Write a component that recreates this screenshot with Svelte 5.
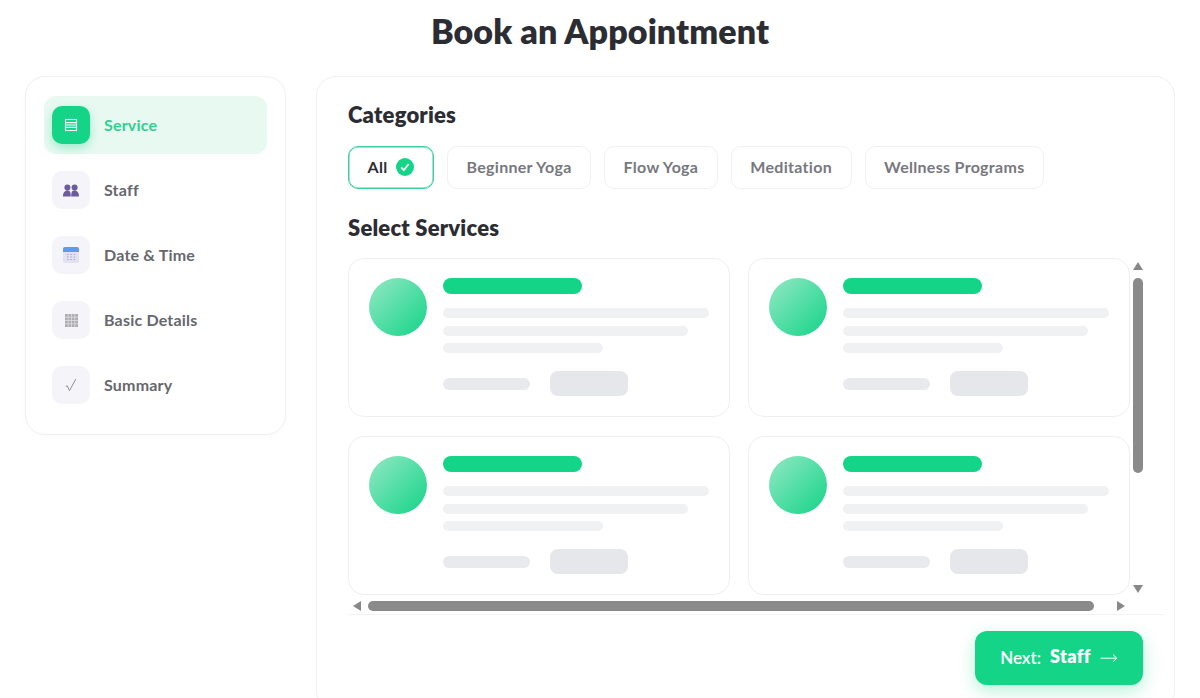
<script>
  const steps = [
    { id: 'service', label: 'Service' },
    { id: 'staff', label: 'Staff' },
    { id: 'date', label: 'Date & Time' },
    { id: 'details', label: 'Basic Details' },
    { id: 'summary', label: 'Summary' }
  ];
  const categories = ['All', 'Beginner Yoga', 'Flow Yoga', 'Meditation', 'Wellness Programs'];
  const placeholders = [1, 2, 3, 4, 5, 6];

  let category = $state('All');
</script>

<div class="page">
  <h1 class="title">Book an Appointment</h1>

  <div class="layout">
    <nav class="sidebar">
      {#each steps as step, i}
        <div class="step" class:active={i === 0}>
          <span class="step-icon">
            {#if step.id === 'service'}
              <svg width="14" height="14" viewBox="0 0 14 14">
                <rect x="1.5" y="1.5" width="11" height="11" fill="none" stroke="#fff" stroke-width="1.1" />
                <path d="M1.5 4.6h11M1.5 7h11M1.5 9.4h11" stroke="#fff" stroke-width="1.1" />
              </svg>
            {:else if step.id === 'staff'}
              <svg width="16" height="13" viewBox="0 0 16 13" fill="#6f5a9e">
                <circle cx="4.4" cy="3.4" r="3" />
                <circle cx="11.6" cy="3.4" r="3" />
                <path d="M0 12.6c0-3.6 1.6-6 4.4-6s3.3 1.6 3.4 6zM8.2 12.6c.1-4.4 .6-6 3.4-6s4.4 2.4 4.4 6z" />
              </svg>
            {:else if step.id === 'date'}
              <svg width="18" height="18" viewBox="0 0 18 18">
                <rect x="1" y="1" width="16" height="16" rx="2" fill="#e2e1f3" />
                <path d="M1 6V3a2 2 0 0 1 2-2h12a2 2 0 0 1 2 2v3z" fill="#5c9cf0" />
                <path d="M5 8.5h1.5M8.3 8.5h1.5M11.6 8.5h1.5M5 11h1.5M8.3 11h1.5M11.6 11h1.5M5 13.5h1.5M8.3 13.5h1.5M11.6 13.5h1.5" stroke="#a9a6c6" stroke-width="1.2" />
              </svg>
            {:else if step.id === 'details'}
              <svg width="13" height="13" viewBox="0 0 13 13">
                <rect width="13" height="13" fill="#adadb2" />
                <path d="M3.2 0v13M6.5 0v13M9.8 0v13M0 3.2h13M0 6.5h13M0 9.8h13" stroke="#e4e4e8" stroke-width=".7" />
              </svg>
            {:else}
              <svg width="14" height="14" viewBox="0 0 14 14" fill="none">
                <path d="M1.8 8.6l1.4-.9 2.3 5L11.8 1" stroke="#8f8f94" stroke-width="1" />
              </svg>
            {/if}
          </span>
          <span class="step-label">{step.label}</span>
        </div>
      {/each}
    </nav>

    <main class="panel">
      <h2 class="heading">Categories</h2>
      <div class="chips">
        {#each categories as name}
          <button class="chip" class:selected={category === name} onclick={() => (category = name)}>
            {name}
            {#if category === name}
              <svg width="18" height="18" viewBox="0 0 18 18">
                <circle cx="9" cy="9" r="9" fill="#14d488" />
                <path d="M5.2 9.4l2.6 2.8 4.8-6.2" fill="none" stroke="#fff" stroke-width="1.7" />
              </svg>
            {/if}
          </button>
        {/each}
      </div>

      <h2 class="heading services-heading">Select Services</h2>
      <div class="services">
        <div class="viewport">
          <div class="grid">
            {#each placeholders as id (id)}
              <div class="card">
                <div class="avatar"></div>
                <div class="card-body">
                  <div class="bar name"></div>
                  <div class="bar line w1"></div>
                  <div class="bar line w2"></div>
                  <div class="bar line w3"></div>
                  <div class="card-foot">
                    <div class="bar price"></div>
                    <div class="bar action"></div>
                  </div>
                </div>
              </div>
            {/each}
          </div>
        </div>

        <div class="vbar">
          <svg class="arrow-up" width="10" height="8" viewBox="0 0 10 8"><path d="M5 0l5 8H0z" fill="#888" /></svg>
          <div class="vthumb"></div>
          <svg class="arrow-down" width="10" height="8" viewBox="0 0 10 8"><path d="M5 8l5-8H0z" fill="#888" /></svg>
        </div>
        <div class="hbar">
          <svg class="arrow-left" width="8" height="10" viewBox="0 0 8 10"><path d="M0 5l8-5v10z" fill="#888" /></svg>
          <div class="hthumb"></div>
          <svg class="arrow-right" width="8" height="10" viewBox="0 0 8 10"><path d="M8 5L0 0v10z" fill="#888" /></svg>
        </div>
      </div>

      <div class="footer">
        <button class="next">
          <span>Next:</span>
          <strong>Staff</strong>
          <svg width="18" height="10" viewBox="0 0 18 10" fill="none">
            <path d="M0.5 5.2h16M13 1.6l3.8 3.6L13 8.8" stroke="#fff" stroke-width="1" />
          </svg>
        </button>
      </div>
    </main>
  </div>
</div>

<style>
  :global(body) {
    background: #fff;
    font-family: 'Lato', 'Noto Sans', sans-serif;
    color: #2c2d33;
  }

  .page {
    height: 100vh;
    overflow: hidden;
    box-sizing: border-box;
    padding: 10px 25px 0;
  }

  .title {
    margin: 0 0 24px;
    font-size: 34px;
    line-height: 42px;
    font-weight: 800;
    letter-spacing: 0.1px;
    text-align: center;
    color: #2c2d33;
  }

  .layout {
    display: flex;
    align-items: flex-start;
    gap: 30px;
  }

  /* ── Sidebar ────────────────────────── */
  .sidebar {
    width: 261px;
    box-sizing: border-box;
    flex-shrink: 0;
    display: flex;
    flex-direction: column;
    gap: 7px;
    padding: 19px 18px 20px;
    background: #fff;
    border: 1px solid #eef0f2;
    border-radius: 20px;
    box-shadow: 0 2px 8px rgba(0, 0, 0, 0.02);
  }

  .step {
    height: 58px;
    display: flex;
    align-items: center;
    gap: 14px;
    padding: 0 8px;
    border-radius: 12px;
  }
  .step.active {
    background: #e8f9f1;
  }

  .step-icon {
    width: 38px;
    height: 38px;
    display: flex;
    align-items: center;
    justify-content: center;
    background: #f4f4f9;
    border-radius: 10px;
  }
  .active .step-icon {
    background: #14d488;
    box-shadow: 0 4px 10px rgba(20, 212, 136, 0.35);
  }

  .step-label {
    margin-top: -2px;
    font-size: 16px;
    font-weight: 700;
    letter-spacing: 0.2px;
    color: #66676d;
  }
  .active .step-label {
    color: #2fd192;
  }

  /* ── Panel ──────────────────────────── */
  .panel {
    width: 859px;
    box-sizing: border-box;
    padding: 25px 31px 25px;
    background: #fff;
    border: 1px solid #eef0f2;
    border-radius: 20px;
  }

  .heading {
    margin: 0;
    font-size: 22px;
    line-height: 26px;
    font-weight: 800;
    letter-spacing: 0.2px;
    color: #2c2d33;
  }
  .services-heading {
    margin-top: 26px;
    margin-bottom: 17px;
  }

  .chips {
    display: flex;
    gap: 13px;
    margin-top: 18px;
  }
  .chip {
    height: 43px;
    display: flex;
    align-items: center;
    gap: 9px;
    padding: 0 18.5px 2px;
    font: 700 16px 'Lato', 'Noto Sans', sans-serif;
    letter-spacing: 0.3px;
    color: #77787e;
    background: #fff;
    border: 1px solid #f0f1f3;
    border-radius: 10px;
  }
  .chip.selected {
    color: #2c2d33;
    border-color: #3fcf9d;
    box-shadow: inset 0 0 0 0.5px #3fcf9d;
  }

  /* ── Card list with its scrollbars ──── */
  .services {
    display: grid;
    grid-template-columns: 785px 10px;
    grid-template-rows: 343px 10px;
  }
  .viewport {
    overflow: hidden;
  }

  .vbar {
    display: flex;
    flex-direction: column;
    align-items: center;
  }
  .hbar {
    display: flex;
    align-items: center;
  }
  .arrow-up {
    flex-shrink: 0;
    margin: 4px 0 8px;
  }
  .arrow-down {
    flex-shrink: 0;
    margin: auto 0 8px;
  }
  .arrow-left {
    flex-shrink: 0;
    margin: 0 7px 0 5px;
  }
  .arrow-right {
    flex-shrink: 0;
    margin: 0 8px 0 auto;
  }
  .vthumb {
    width: 10px;
    height: 195px;
    background: #8a8a8a;
    border-radius: 5px;
  }
  .hthumb {
    width: 726px;
    height: 10px;
    background: #8a8a8a;
    border-radius: 5px;
  }

  .grid {
    display: grid;
    grid-template-columns: 382px 382px;
    column-gap: 18px;
    row-gap: 19px;
  }

  .card {
    height: 159px;
    box-sizing: border-box;
    display: flex;
    gap: 16px;
    padding: 19px 20px;
    background: #fff;
    border: 1px solid #eeeff1;
    border-radius: 16px;
  }
  .avatar {
    width: 58px;
    height: 58px;
    flex-shrink: 0;
    border-radius: 50%;
    background: linear-gradient(135deg, #93e8c4, #14d488);
  }
  .card-body {
    flex: 1;
    display: flex;
    flex-direction: column;
  }

  .bar {
    border-radius: 8px;
    background: #f0f1f3;
  }
  .name {
    width: 139px;
    height: 16px;
    flex-shrink: 0;
    background: #14d488;
  }
  .line {
    height: 10px;
    flex-shrink: 0;
    margin-top: 7.5px;
  }
  .name + .line {
    margin-top: 14px;
  }
  .w1 { width: 100%; }
  .w2 { width: 92%; }
  .w3 { width: 60%; }

  .card-foot {
    display: flex;
    align-items: center;
    gap: 20px;
    margin-top: 18px;
  }
  .price {
    width: 87px;
    height: 12px;
    background: #e9eaed;
  }
  .action {
    width: 78px;
    height: 25px;
    background: #e5e7eb;
  }

  /* ── Footer ─────────────────────────── */
  .footer {
    display: flex;
    justify-content: flex-end;
    margin: 3px -22px 0 0;
    padding: 16px 22px 0 0;
    border-top: 1px solid #f2f3f5;
  }
  .next {
    width: 168px;
    height: 54px;
    display: flex;
    align-items: center;
    justify-content: center;
    gap: 9px;
    padding-bottom: 2px;
    font: 600 17px 'Lato', 'Noto Sans', sans-serif;
    color: #fff;
    background: #14d488;
    border: none;
    border-radius: 12px;
    box-shadow: 0 6px 18px rgba(20, 212, 136, 0.3);
  }
  .next strong {
    margin-top: -3px;
    font-size: 18px;
    font-weight: 800;
    letter-spacing: 0.4px;
  }
</style>
